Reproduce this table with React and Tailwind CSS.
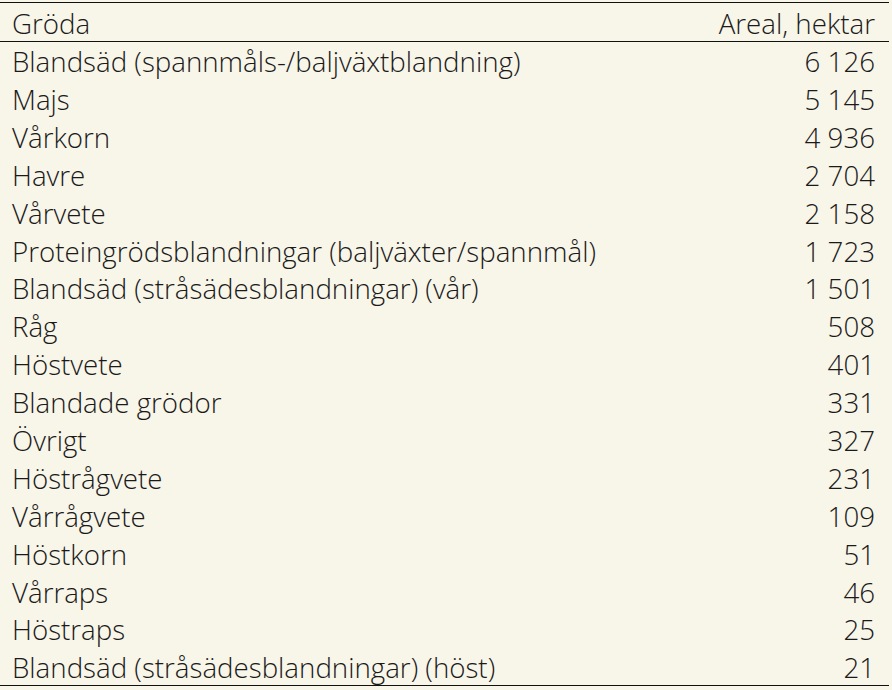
import React from 'react';

const rows = [
  ['Blandsäd (spannmåls-/baljväxtblandning)', '6 126'],
  ['Majs', '5 145'],
  ['Vårkorn', '4 936'],
  ['Havre', '2 704'],
  ['Vårvete', '2 158'],
  ['Proteingrödsblandningar (baljväxter/spannmål)', '1 723'],
  ['Blandsäd (stråsädesblandningar) (vår)', '1 501'],
  ['Råg', '508'],
  ['Höstvete', '401'],
  ['Blandade grödor', '331'],
  ['Övrigt', '327'],
  ['Höstrågvete', '231'],
  ['Vårrågvete', '109'],
  ['Höstkorn', '51'],
  ['Vårraps', '46'],
  ['Höstraps', '25'],
  ['Blandsäd (stråsädesblandningar) (höst)', '21'],
];

export default function App() {
  return (
    <div
      className="w-[892px] h-[690px] bg-[#f8f5e9] text-[#1a1a1a] pt-[2px]"
      style={{ fontFamily: '"Open Sans", "Liberation Sans", sans-serif' }}
    >
      <table className="w-[889px] border-collapse font-light text-[27.7px]">
        <thead>
          <tr className="border-t border-b border-[#111] h-[39px]">
            <th className="text-left font-light pl-3 pt-[3px] leading-none">Gröda</th>
            <th className="text-right font-light pr-[14px] pt-[3px] leading-none">Areal, hektar</th>
          </tr>
        </thead>
        <tbody className="border-b border-[#111]">
          {rows.map(([name, value]) => (
            <tr key={name} className="h-[37.9px]">
              <td className="pl-3 pt-[3px] leading-none">{name}</td>
              <td className="text-right pr-[14px] pt-[3px] leading-none">{value}</td>
            </tr>
          ))}
        </tbody>
      </table>
    </div>
  );
}
